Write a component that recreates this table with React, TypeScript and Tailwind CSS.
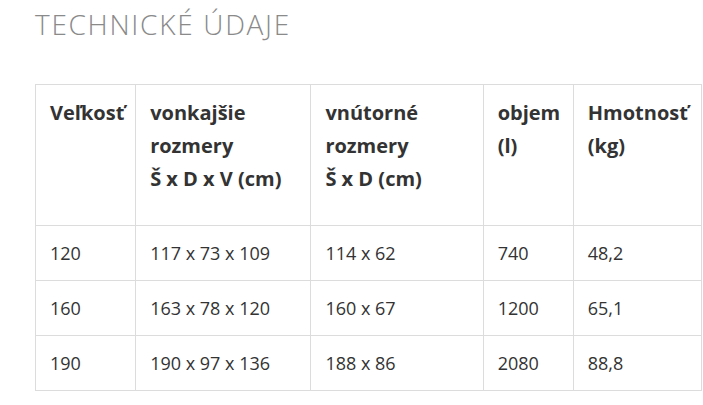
import React from 'react';

const rows = [
    ['120', '117 x 73 x 109', '114 x 62', '740', '48,2'],
    ['160', '163 x 78 x 120', '160 x 67', '1200', '65,1'],
    ['190', '190 x 97 x 136', '188 x 86', '2080', '88,8'],
];

const widths = ['w-[100px]', 'w-[175px]', 'w-[172px]', 'w-[90px]', 'w-[128px]'];

export default function App() {
    return (
        <div className="min-h-[405px] bg-white pl-[35px] pt-[4px] font-['Open_Sans',sans-serif] text-[#333]">
            <h2 className="text-[28px] font-light leading-[40px] tracking-[1.7px] text-[#8a8a8a]">TECHNICKÉ ÚDAJE</h2>
            <table className="mt-[40px] w-[667px] table-fixed border-collapse">
                <colgroup>
                    {widths.map((w) => (
                        <col key={w} className={w} />
                    ))}
                </colgroup>
                <thead>
                    <tr>
                        <th className="border border-[#dcdcdc] px-[14px] pt-[11px] pb-[30px] text-left align-top text-[20px] leading-[33px] font-bold">Veľkosť</th>
                        <th className="border border-[#dcdcdc] px-[14px] pt-[11px] pb-[30px] text-left align-top text-[20px] leading-[33px] font-bold">
                            vonkajšie
                            <br />
                            rozmery
                            <br />Š x D x V (cm)
                        </th>
                        <th className="border border-[#dcdcdc] px-[14px] pt-[11px] pb-[30px] text-left align-top text-[20px] leading-[33px] font-bold">
                            vnútorné
                            <br />
                            rozmery
                            <br />Š x D (cm)
                        </th>
                        <th className="border border-[#dcdcdc] px-[14px] pt-[11px] pb-[30px] text-left align-top text-[20px] leading-[33px] font-bold">
                            objem
                            <br />
                            (l)
                        </th>
                        <th className="border border-[#dcdcdc] px-[14px] pt-[11px] pb-[30px] text-left align-top text-[20px] leading-[33px] font-bold">
                            Hmotnosť
                            <br />
                            (kg)
                        </th>
                    </tr>
                </thead>
                <tbody>
                    {rows.map((row) => (
                        <tr key={row[0]}>
                            {row.map((cell, i) => (
                                <td key={i} className="h-[55px] border border-[#dcdcdc] px-[14px] text-[18px] leading-[27px]">
                                    {cell}
                                </td>
                            ))}
                        </tr>
                    ))}
                </tbody>
            </table>
        </div>
    );
}
